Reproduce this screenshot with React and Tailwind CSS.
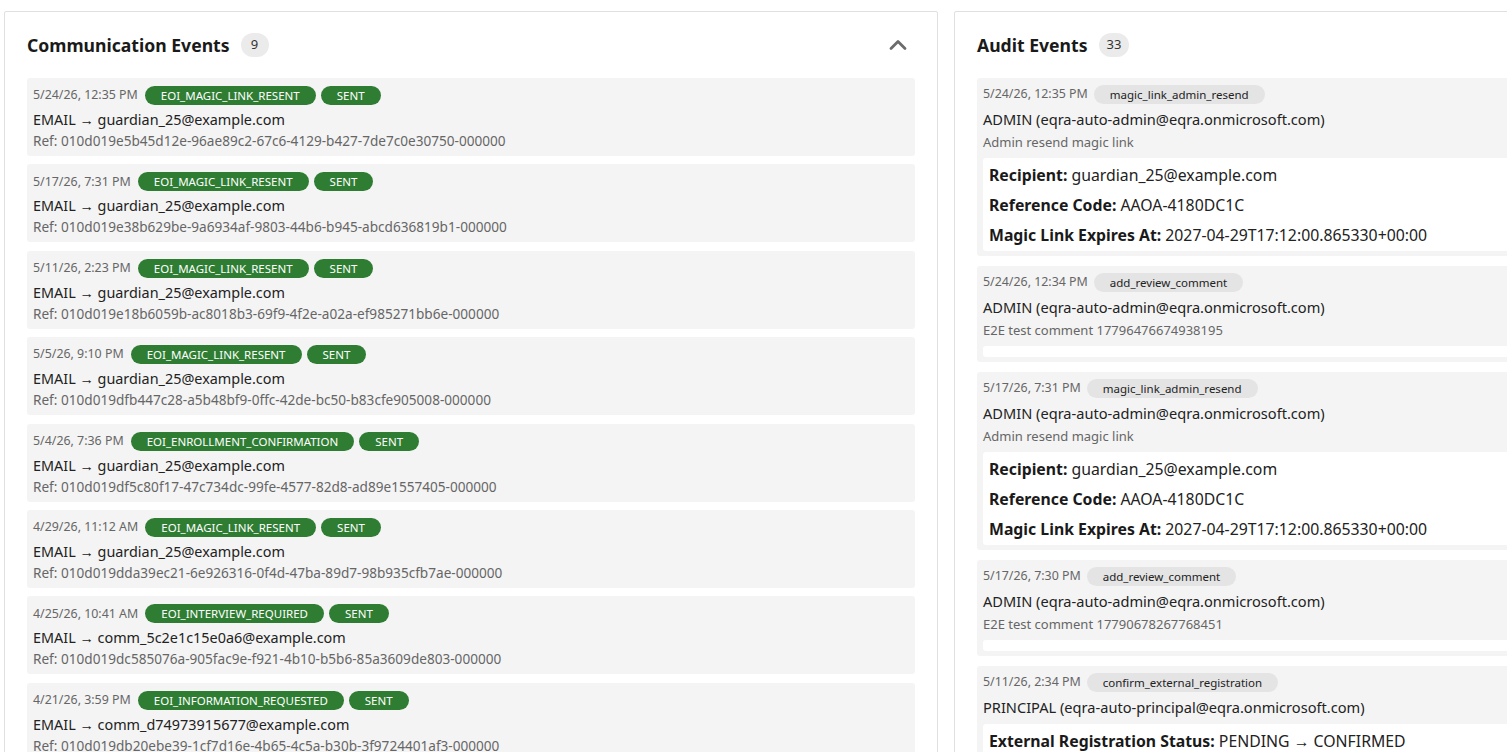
import { ChevronUp } from 'lucide-react';

const FONT = { fontFamily: '"Noto Sans", "Open Sans", sans-serif' };

const commEvents = [
  { at: '5/24/26, 12:35 PM', template: 'EOI_MAGIC_LINK_RESENT', to: 'guardian_25@example.com', ref: '010d019e5b45d12e-96ae89c2-67c6-4129-b427-7de7c0e30750-000000' },
  { at: '5/17/26, 7:31 PM', template: 'EOI_MAGIC_LINK_RESENT', to: 'guardian_25@example.com', ref: '010d019e38b629be-9a6934af-9803-44b6-b945-abcd636819b1-000000' },
  { at: '5/11/26, 2:23 PM', template: 'EOI_MAGIC_LINK_RESENT', to: 'guardian_25@example.com', ref: '010d019e18b6059b-ac8018b3-69f9-4f2e-a02a-ef985271bb6e-000000' },
  { at: '5/5/26, 9:10 PM', template: 'EOI_MAGIC_LINK_RESENT', to: 'guardian_25@example.com', ref: '010d019dfb447c28-a5b48bf9-0ffc-42de-bc50-b83cfe905008-000000' },
  { at: '5/4/26, 7:36 PM', template: 'EOI_ENROLLMENT_CONFIRMATION', to: 'guardian_25@example.com', ref: '010d019df5c80f17-47c734dc-99fe-4577-82d8-ad89e1557405-000000' },
  { at: '4/29/26, 11:12 AM', template: 'EOI_MAGIC_LINK_RESENT', to: 'guardian_25@example.com', ref: '010d019dda39ec21-6e926316-0f4d-47ba-89d7-98b935cfb7ae-000000' },
  { at: '4/25/26, 10:41 AM', template: 'EOI_INTERVIEW_REQUIRED', to: 'comm_5c2e1c15e0a6@example.com', ref: '010d019dc585076a-905fac9e-f921-4b10-b5b6-85a3609de803-000000' },
  { at: '4/21/26, 3:59 PM', template: 'EOI_INFORMATION_REQUESTED', to: 'comm_d74973915677@example.com', ref: '010d019db20ebe39-1cf7d16e-4b65-4c5a-b30b-3f9724401af3-000000' },
];

const magicDetails = [
  ['Recipient:', 'guardian_25@example.com'],
  ['Reference Code:', 'AAOA-4180DC1C'],
  ['Magic Link Expires At:', '2027-04-29T17:12:00.865330+00:00'],
];

const auditEvents = [
  { at: '5/24/26, 12:35 PM', action: 'magic_link_admin_resend', actor: 'ADMIN (eqra-auto-admin@eqra.onmicrosoft.com)', note: 'Admin resend magic link', details: magicDetails },
  { at: '5/24/26, 12:34 PM', action: 'add_review_comment', actor: 'ADMIN (eqra-auto-admin@eqra.onmicrosoft.com)', note: 'E2E test comment 17796476674938195', details: [] },
  { at: '5/17/26, 7:31 PM', action: 'magic_link_admin_resend', actor: 'ADMIN (eqra-auto-admin@eqra.onmicrosoft.com)', note: 'Admin resend magic link', details: magicDetails },
  { at: '5/17/26, 7:30 PM', action: 'add_review_comment', actor: 'ADMIN (eqra-auto-admin@eqra.onmicrosoft.com)', note: 'E2E test comment 17790678267768451', details: [] },
  { at: '5/11/26, 2:34 PM', action: 'confirm_external_registration', actor: 'PRINCIPAL (eqra-auto-principal@eqra.onmicrosoft.com)', note: null, details: [['External Registration Status:', 'PENDING → CONFIRMED'], ['Registration Reference:', 'EXT-4180DC1C']] },
];

function PanelHeader({ title, count, collapsible }) {
  return (
    <div className="flex items-center justify-between h-[30px] mb-[18px]">
      <div className="flex items-center">
        <h2 className="text-[17.6px] font-bold text-[#1a1a1a] leading-[24px]">{title}</h2>
        <span className="ml-[11px] h-6 min-w-[28px] px-2 rounded-full bg-[#ebebeb] text-[13px] text-[#333] flex items-center justify-center">
          {count}
        </span>
      </div>
      {collapsible && (
        <button className="text-[#6b6b6b] mr-[3px]">
          <ChevronUp size={28} strokeWidth={2.4} />
        </button>
      )}
    </div>
  );
}

function CommCard({ ev }) {
  return (
    <div className="rounded-[3px] bg-[#f4f4f4] px-[6px] pt-[8px] pb-[5px] flex flex-col">
      <div className="flex items-center gap-[5px] h-[19px]">
        <span className="text-[12.4px] text-[#666] mr-[2px]">{ev.at}</span>
        <span className="h-[19px] px-4 rounded-full bg-[#2e7d32] text-white text-[11.5px] leading-[19px]">{ev.template}</span>
        <span className="h-[19px] px-4 rounded-full bg-[#2e7d32] text-white text-[11.5px] leading-[19px]">SENT</span>
      </div>
      <div className="mt-1 text-[14.4px] leading-[22px] text-[#222]">EMAIL → {ev.to}</div>
      <div className="text-[13.6px] leading-[20px] text-[#666]">Ref: {ev.ref}</div>
    </div>
  );
}

function AuditCard({ ev }) {
  return (
    <div className="rounded-[3px] bg-[#f4f4f4] px-[6px] pt-[7px] pb-[5px] flex flex-col">
      <div className="flex items-center gap-[6px] h-[19px]">
        <span className="text-[12.4px] text-[#666]">{ev.at}</span>
        <span className="h-[19px] px-4 rounded-full bg-[#e4e4e4] text-[#222] text-[11.5px] leading-[19px]">{ev.action}</span>
      </div>
      <div className="mt-1 text-[14.6px] leading-[22px] text-[#222]">{ev.actor}</div>
      {ev.note && <div className="mt-[2px] text-[13px] leading-[20px] text-[#666]">{ev.note}</div>}
      <div className="mt-[6px] rounded-[3px] bg-white px-[6px] pt-[5px] pb-[4px] min-h-[11px] flex flex-col gap-[6px]">
        {ev.details.map(([k, v]) => (
          <div key={k} className="text-[15.8px] leading-[24px] text-[#222]">
            <span className="font-bold text-[#1a1a1a]">{k}</span> {v}
          </div>
        ))}
      </div>
    </div>
  );
}

export default function App() {
  return (
    <div className="w-full h-screen overflow-hidden bg-white" style={FONT}>
      <div className="flex gap-4 pl-1 pt-[11px] w-[1900px]">
        <section className="w-[934px] shrink-0 border border-[#e0e0e0] rounded-[2px] px-[22px] pt-[18px] pb-[22px]">
          <PanelHeader title="Communication Events" count="9" collapsible />
          <div className="flex flex-col gap-[8.4px]">
            {commEvents.map((ev) => (
              <CommCard key={ev.ref} ev={ev} />
            ))}
          </div>
        </section>

        <section className="w-[934px] shrink-0 border border-[#e0e0e0] rounded-[2px] px-[22px] pt-[18px] pb-[22px]">
          <PanelHeader title="Audit Events" count="33" collapsible />
          <div className="flex flex-col gap-[10px]">
            {auditEvents.map((ev, i) => (
              <AuditCard key={i} ev={ev} />
            ))}
          </div>
        </section>
      </div>
    </div>
  );
}
